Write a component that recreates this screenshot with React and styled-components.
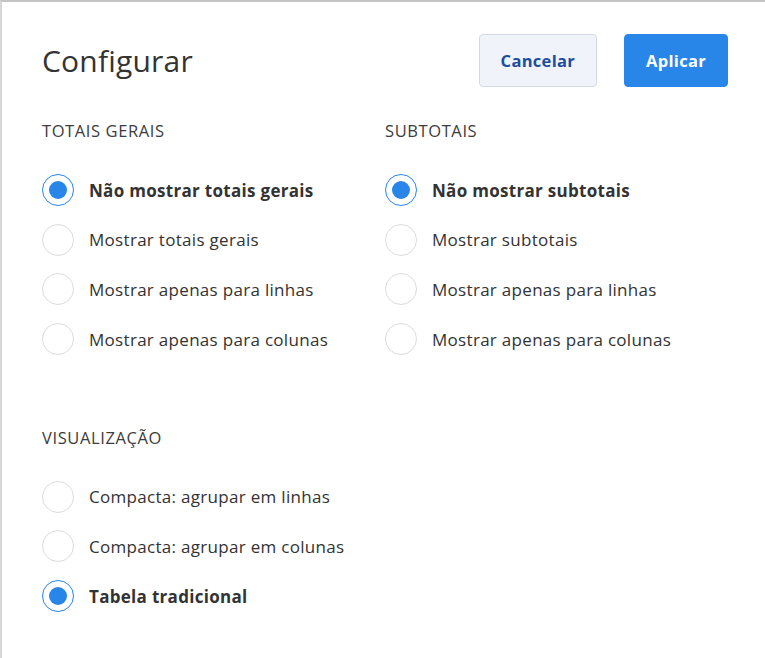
import React, {useState} from 'react';
import styled, {createGlobalStyle} from 'styled-components';

const GlobalStyle = createGlobalStyle`
    html, body {
        margin:0;
        padding:0;
        background:#fff;
    }
    body {
        font-family:"Open Sans", "Liberation Sans", sans-serif;
        color:#333;
    }
`;

const Panel = styled.div`
    box-sizing:border-box;
    height:658px;
    border-top:2px solid #c4c4c4;
    border-left:2px solid #d6d6d6;
    padding:32px 37px 0 40px;
`;

const Header = styled.div`
    display:flex;
    align-items:center;
    justify-content:space-between;
    height:53px;
`;

const Title = styled.h1`
    margin:0;
    font-size:30px;
    font-weight:400;
    color:#333;
    letter-spacing:0.2px;
`;

const Actions = styled.div`
    display:flex;
    gap:27px;
`;

const Button = styled.button`
    height:53px;
    padding:0 21px;
    border-radius:4px;
    font-family:inherit;
    font-size:16.5px;
    font-weight:700;
    letter-spacing:0.3px;
    cursor:pointer;
    border:1px solid ${props => props.primary ? '#2886e8' : '#d3dae5'};
    background:${props => props.primary ? '#2886e8' : '#f0f4fa'};
    color:${props => props.primary ? '#fff' : '#1d4e9e'};
`;

const Columns = styled.div`
    display:grid;
    grid-template-columns:343px 1fr;
    margin-top:34px;
`;

const Section = styled.div`
    display:flex;
    flex-direction:column;
    margin-top:${props => props.spaced ? '55px' : '0'};
`;

const SectionTitle = styled.div`
    font-size:16.5px;
    letter-spacing:0.6px;
    color:#3c3c3c;
    line-height:20px;
    margin-bottom:33px;
`;

const Option = styled.label`
    display:flex;
    align-items:center;
    gap:15px;
    height:32px;
    margin-bottom:17.7px;
    cursor:pointer;
    font-size:17px;
    letter-spacing:0.3px;
    font-weight:${props => props.checked ? 700 : 400};
    color:#333;
`;

const Circle = styled.span`
    box-sizing:border-box;
    flex:none;
    width:32px;
    height:32px;
    border-radius:50%;
    border:1px solid ${props => props.checked ? '#2886e8' : '#dcdcdc'};
    display:flex;
    align-items:center;
    justify-content:center;
    &::after{
        content:'';
        width:18px;
        height:18px;
        border-radius:50%;
        background:${props => props.checked ? '#2886e8' : 'transparent'};
    }
`;

const RadioGroup = ({title, options, value, onChange, spaced}) => (
    <Section spaced={spaced}>
        <SectionTitle>{title}</SectionTitle>
        {options.map((opt, i) => (
            <Option key={opt} checked={value === i} onClick={() => onChange(i)}>
                <Circle checked={value === i} />
                {opt}
            </Option>
        ))}
    </Section>
);

const App = () => {
    const [totais, setTotais] = useState(0);
    const [subtotais, setSubtotais] = useState(0);
    const [visual, setVisual] = useState(2);

    return (
        <>
            <GlobalStyle />
            <Panel>
                <Header>
                    <Title>Configurar</Title>
                    <Actions>
                        <Button>Cancelar</Button>
                        <Button primary>Aplicar</Button>
                    </Actions>
                </Header>
                <Columns>
                    <RadioGroup
                        title="TOTAIS GERAIS"
                        value={totais}
                        onChange={setTotais}
                        options={['Não mostrar totais gerais', 'Mostrar totais gerais', 'Mostrar apenas para linhas', 'Mostrar apenas para colunas']}
                    />
                    <RadioGroup
                        title="SUBTOTAIS"
                        value={subtotais}
                        onChange={setSubtotais}
                        options={['Não mostrar subtotais', 'Mostrar subtotais', 'Mostrar apenas para linhas', 'Mostrar apenas para colunas']}
                    />
                </Columns>
                <RadioGroup
                    spaced
                    title="VISUALIZAÇÃO"
                    value={visual}
                    onChange={setVisual}
                    options={['Compacta: agrupar em linhas', 'Compacta: agrupar em colunas', 'Tabela tradicional']}
                />
            </Panel>
        </>
    );
};

export default App;
